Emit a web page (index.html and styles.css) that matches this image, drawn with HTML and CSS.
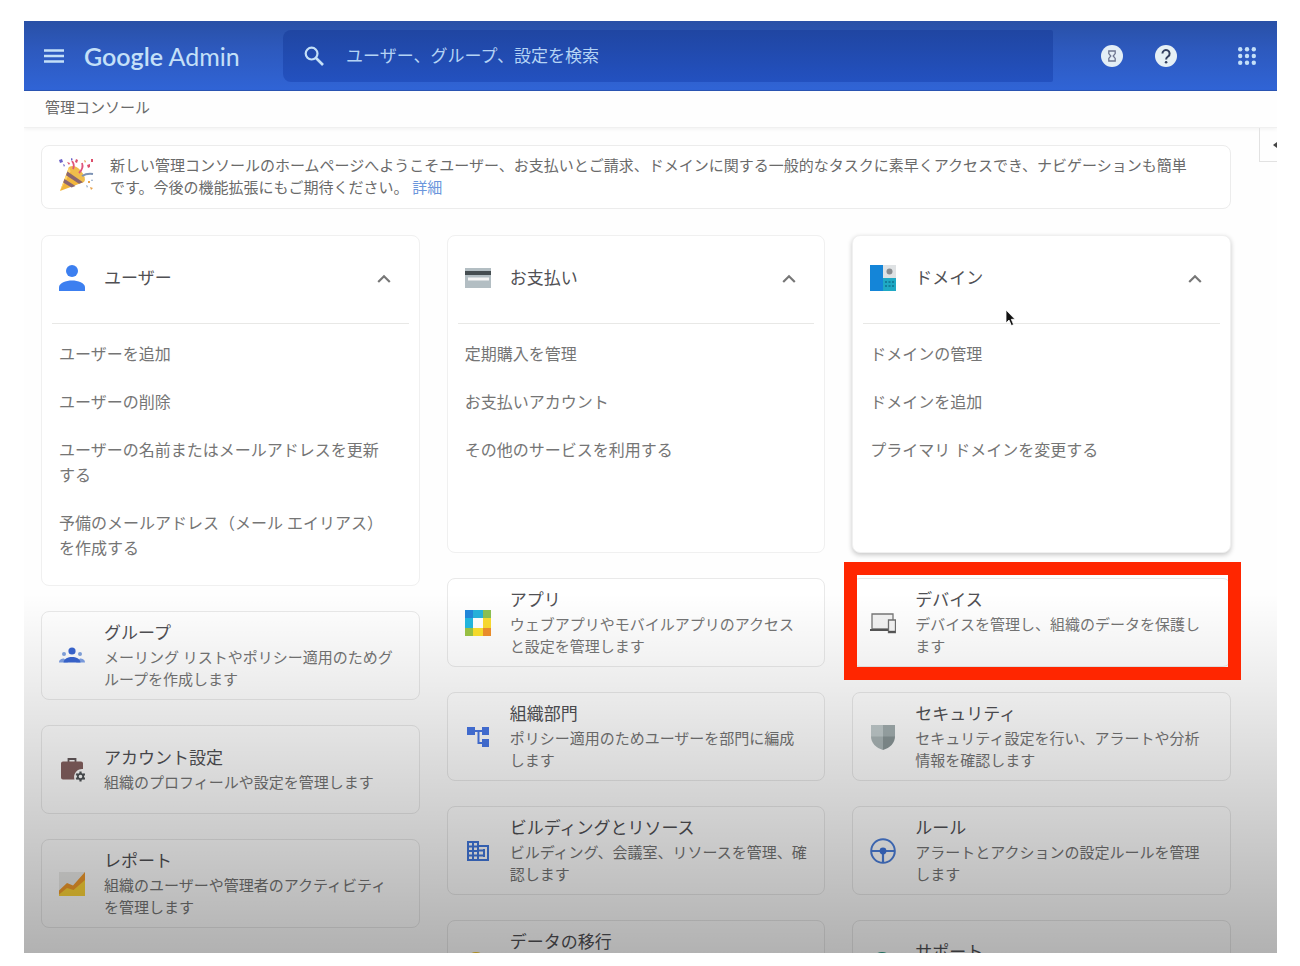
FILE: index.html
```html
<!DOCTYPE html>
<html lang="ja">
<head>
<meta charset="utf-8">
<meta name="viewport" content="width=device-width, initial-scale=1">
<title>Google Admin</title>
<link rel="stylesheet" href="styles.css">
</head>
<body>
<div class="frame">
  <header class="topbar">
    <div class="brand">
      <button class="icon-button" type="button" aria-label="メニュー">
        <svg width="20" height="16" viewBox="0 0 20 16"><path d="M0 2.5h20M0 8h20M0 13.5h20" stroke="currentColor" stroke-width="2.4"/></svg>
      </button>
      <a class="logo" href="#"><span class="logo-name">Google</span> Admin</a>
    </div>
    <form class="search" role="search">
      <button class="icon-button" type="button" aria-label="検索">
        <svg width="20" height="20" viewBox="0 0 20 20" fill="none" stroke="currentColor"><circle cx="7.6" cy="7.6" r="5.9" stroke-width="2.2"/><path d="M12 12l7 7" stroke-width="2.6"/></svg>
      </button>
      <input class="search-input" type="text" aria-label="検索" placeholder="ユーザー、グループ、設定を検索">
    </form>
    <div class="actions">
      <button class="icon-button" type="button" aria-label="タスク">
        <svg width="22" height="22" viewBox="0 0 22 22"><circle cx="11" cy="11" r="11" fill="#e3eef6"/><path d="M7.800 6h6.400v2.600L12.200 11l2 2.400V16H7.800v-2.600l2-2.400-2-2.400z" fill="none" stroke="#6d7590" stroke-width="1.300"/></svg>
      </button>
      <button class="icon-button" type="button" aria-label="ヘルプ">
        <svg width="22" height="22" viewBox="0 0 22 22"><circle cx="11" cy="11" r="11" fill="#e6f0f5"/><path d="M7.400 8.600a3.600 3.600 0 1 1 5.700 2.900c-1.300 1-2 1.500-2 2.900" fill="none" stroke="#33405f" stroke-width="2"/><circle cx="11.100" cy="17.200" r="1.300" fill="#33405f"/></svg>
      </button>
      <button class="icon-button apps" type="button" aria-label="アプリ一覧">
        <svg width="18" height="18" viewBox="0 0 18 18" fill="currentColor"><circle cx="2.200" cy="2.200" r="2.200"/><circle cx="9" cy="2.200" r="2.200"/><circle cx="15.800" cy="2.200" r="2.200"/><circle cx="2.200" cy="9" r="2.200"/><circle cx="9" cy="9" r="2.200"/><circle cx="15.800" cy="9" r="2.200"/><circle cx="2.200" cy="15.800" r="2.200"/><circle cx="9" cy="15.800" r="2.200"/><circle cx="15.800" cy="15.800" r="2.200"/></svg>
      </button>
    </div>
  </header>

  <nav class="breadcrumb">管理コンソール</nav>

  <main class="content">
    <button class="side-tab" type="button" aria-label="パネルを開く">
      <svg width="8" height="12" viewBox="0 0 8 12"><path d="M8 0L0 6l8 6z" fill="#444"/></svg>
    </button>

    <section class="banner">
      <svg class="banner-icon" width="36" height="36" viewBox="0 0 36 36">
        <path d="M2 34L11 10Q22 14 26 25z" fill="#f2b63c"/>
        <path d="M2 34L11 10l3 2z" fill="#ffd56b"/>
        <path d="M11 10Q17 7 23 14T26 25Q15 24 11 10z" fill="#f0bd4c"/>
        <path d="M6.500 22l11 7-4 1.500-8.300-5zM9.400 14.500l15.600 10.700-4 1.600L8 18.200z" fill="#8a6670"/>
        <path d="M15 12q2-4-1-8M21 16q5-5 3-10" fill="none" stroke="#e0567a" stroke-width="1.800"/>
        <path d="M24 19q5-3 11-2" fill="none" stroke="#7d93b5" stroke-width="2"/>
        <path d="M1 3l3-1 1 3-3 1zM5 7l2 1-1 2zM13 1l2 1-2 2z" fill="#6c62c8"/>
        <path d="M18 2l2 1-1 3-2-1zM29 8l3-1 0 3-2 1zM33 2l2 0 0 3-2 0zM9 5l3 1-1 2z" fill="#dc4f6c"/>
        <path d="M26 3l2 1-1 2zM30 24l2 0 0 2-2 0zM32 30l3 1-2 2z" fill="#e8a24a"/>
        <path d="M28 28l2 1-1 2zM34 22l1 2-2 0z" fill="#94aac8"/>
      </svg>
      <p class="banner-text">新しい管理コンソールのホームページへようこそユーザー、お支払いとご請求、ドメインに関する一般的なタスクに素早くアクセスでき、ナビゲーションも簡単<br>です。今後の機能拡張にもご期待ください。 <a class="more" href="#">詳細</a></p>
    </section>

    <div class="columns">
      <div class="column">
        <section class="card panel">
          <div class="panel-head">
            <svg class="icon" viewBox="0 0 26 26" fill="#3c7ff0"><circle cx="13" cy="6" r="6"/><path d="M0 26v-3.500C0 18 7 15.600 13 15.600S26 18 26 22.500V26z"/></svg>
            <h2 class="title">ユーザー</h2>
            <button class="chevron" type="button" aria-label="閉じる"><svg width="14" height="9" viewBox="0 0 14 9"><path d="M1.200 8L7 2.200 12.800 8" fill="none" stroke="#777" stroke-width="2.200"/></svg></button>
          </div>
          <ul class="links">
            <li><a href="#">ユーザーを追加</a></li>
            <li><a href="#">ユーザーの削除</a></li>
            <li><a href="#">ユーザーの名前またはメールアドレスを更新<br>する</a></li>
            <li><a href="#">予備のメールアドレス（メール エイリアス）<br>を作成する</a></li>
          </ul>
        </section>
        <a class="card tile" href="#">
          <svg class="icon" viewBox="0 0 26 26"><circle cx="13" cy="8" r="3.600" fill="#3a66d2"/><circle cx="5" cy="11" r="2" fill="#84a5e0"/><circle cx="21" cy="11" r="2" fill="#84a5e0"/><path d="M0 19.500c0-3 2.500-4 5-4l4 4zM26 19.500c0-3-2.500-4-5-4l-4 4z" fill="#7fa1e6"/><path d="M4.500 19.500C5 15.500 9 14 13 14s8 1.500 8.500 5.500z" fill="#3a66d2"/></svg>
          <span class="tile-text"><strong class="title">グループ</strong><span class="desc">メーリング リストやポリシー適用のためグ<br>ループを作成します</span></span>
        </a>
        <a class="card tile" href="#">
          <svg class="icon" viewBox="0 0 26 26"><path d="M9.500 5V2h7v3" fill="none" stroke="#64595b" stroke-width="1.800"/><path d="M4 4.500h18q2 0 2 2V12a8 8 0 0 0-8.500 10.500H4q-2 0-2-2v-14q0-2 2-2z" fill="#84605f"/><path d="M21.500 14.500v10M17.200 17l8.600 5M25.800 17l-8.600 5" stroke="#505457" stroke-width="2.200"/><circle cx="21.500" cy="19.500" r="2.700" fill="#fff" stroke="#505457" stroke-width="1.800"/></svg>
          <span class="tile-text"><strong class="title">アカウント設定</strong><span class="desc">組織のプロフィールや設定を管理します</span></span>
        </a>
        <a class="card tile" href="#">
          <svg class="icon" viewBox="0 0 26 26"><path d="M0 1h26v24H0z" fill="#ececea"/><path d="M0 22.500L8 16l5 2L26 5v20H0z" fill="#fbd338"/><path d="M0 19.500L8 12l6 2.500L26 1v8L14.500 19 8 17 0 23.500z" fill="#f19a2c"/></svg>
          <span class="tile-text"><strong class="title">レポート</strong><span class="desc">組織のユーザーや管理者のアクティビティ<br>を管理します</span></span>
        </a>
      </div>

      <div class="column">
        <section class="card panel">
          <div class="panel-head">
            <svg class="icon" viewBox="0 0 26 26"><path d="M0 3h26v20H0z" fill="#b3bec3"/><path d="M0 6h26v4H0z" fill="#454d51"/><path d="M3 12.500h21v3H3z" fill="#f5f5f5"/></svg>
            <h2 class="title">お支払い</h2>
            <button class="chevron" type="button" aria-label="閉じる"><svg width="14" height="9" viewBox="0 0 14 9"><path d="M1.200 8L7 2.200 12.800 8" fill="none" stroke="#777" stroke-width="2.200"/></svg></button>
          </div>
          <ul class="links">
            <li><a href="#">定期購入を管理</a></li>
            <li><a href="#">お支払いアカウント</a></li>
            <li><a href="#">その他のサービスを利用する</a></li>
          </ul>
        </section>
        <a class="card tile" href="#">
          <svg class="icon" viewBox="0 0 26 26"><path d="M0 0h8v8H0z" fill="#2188dc"/><path d="M8 0h10v8H8z" fill="#26b3dc"/><path d="M18 0h8v8h-8z" fill="#8cc152"/><path d="M0 8h8v10H0z" fill="#22b8e2"/><path d="M18 8h8v10h-8z" fill="#fbdc30"/><path d="M0 18h8v8H0z" fill="#9cc545"/><path d="M8 18h10v8H8z" fill="#fce02c"/><path d="M18 18h8v8h-8z" fill="#f0902c"/><path d="M8 8h10v10H8z" fill="#fff"/></svg>
          <span class="tile-text"><strong class="title">アプリ</strong><span class="desc">ウェブアプリやモバイルアプリのアクセス<br>と設定を管理します</span></span>
        </a>
        <a class="card tile" href="#">
          <svg class="icon" viewBox="0 0 26 26"><path d="M2 3h8v8H2zM17 3h7v8h-7zM17 15h7v8h-7z" fill="#4877e6"/><path d="M9 7h9M13.500 7v12H18" fill="none" stroke="#4877e6" stroke-width="2"/></svg>
          <span class="tile-text"><strong class="title">組織部門</strong><span class="desc">ポリシー適用のためユーザーを部門に編成<br>します</span></span>
        </a>
        <a class="card tile" href="#">
          <svg class="icon" viewBox="0 0 26 26" fill="none" stroke="#4278dd" stroke-width="2"><path d="M3 4h10v18H3zM13 8h10v14H13zM8 4v18M3 8.500h10M3 13h10M3 17.500h10M14 12.500h5M14 17.500h5M19 11v8"/></svg>
          <span class="tile-text"><strong class="title">ビルディングとリソース</strong><span class="desc">ビルディング、会議室、リソースを管理、確<br>認します</span></span>
        </a>
        <a class="card tile tile-partial" href="#">
          <svg class="icon" viewBox="0 0 26 26"><circle cx="11" cy="10.500" r="10.500" fill="#f5c92e"/></svg>
          <span class="tile-text"><strong class="title">データの移行</strong></span>
        </a>
      </div>

      <div class="column">
        <section class="card panel raised">
          <div class="panel-head">
            <svg class="icon" viewBox="0 0 26 26"><path d="M0 0h13v26H0z" fill="#1485d8"/><path d="M13 0h13v13H13z" fill="#dfe2e4"/><path d="M13 13h13v13H13z" fill="#1fa9c4"/><circle cx="19.500" cy="6.500" r="3" fill="#8a8d90"/><path d="M15 17h9M15 21h9" stroke="#147f9c" stroke-width="1.800" stroke-dasharray="2 1.500"/></svg>
            <h2 class="title">ドメイン</h2>
            <button class="chevron" type="button" aria-label="閉じる"><svg width="14" height="9" viewBox="0 0 14 9"><path d="M1.200 8L7 2.200 12.800 8" fill="none" stroke="#777" stroke-width="2.200"/></svg></button>
            <svg class="pointer" width="11" height="18" viewBox="0 0 11 18"><path d="M1 1v13l3-3 2.400 5.600 2.200-1L6.300 10.300H10z" fill="#111" stroke="#fff" stroke-width=".8"/></svg>
          </div>
          <ul class="links">
            <li><a href="#">ドメインの管理</a></li>
            <li><a href="#">ドメインを追加</a></li>
            <li><a href="#">プライマリ ドメインを変更する</a></li>
          </ul>
        </section>
        <a class="card tile marked" href="#">
          <svg class="icon" viewBox="0 0 26 26"><path d="M2 4h21v15H2z" fill="#f3f3f3" stroke="#777" stroke-width="1.300"/><path d="M0 20h18" stroke="#555" stroke-width="2"/><path d="M18.500 10h7v12.500h-7z" fill="#f5f5f5" stroke="#707070" stroke-width="1.300"/><path d="M18.500 21.800h7" stroke="#555" stroke-width="2"/></svg>
          <span class="tile-text"><strong class="title">デバイス</strong><span class="desc">デバイスを管理し、組織のデータを保護し<br>ます</span></span>
        </a>
        <a class="card tile" href="#">
          <svg class="icon" viewBox="0 0 26 26"><path d="M1 1h12v12H1z" fill="#c2cccd"/><path d="M13 1h12v12H13z" fill="#a3afb0"/><path d="M1 12.500h12V26C6 24 1 19 1 12.500z" fill="#aab5b6"/><path d="M25 12.500H13V26c7-2 12-7 12-13.500z" fill="#899596"/></svg>
          <span class="tile-text"><strong class="title">セキュリティ</strong><span class="desc">セキュリティ設定を行い、アラートや分析<br>情報を確認します</span></span>
        </a>
        <a class="card tile" href="#">
          <svg class="icon" viewBox="0 0 26 26" fill="none" stroke="#4b7fdc"><circle cx="13" cy="13" r="11.800" stroke-width="2"/><path d="M1.500 13h23M13 13v12" stroke-width="2.200"/><circle cx="13" cy="13" r="3.400" fill="#3e74da" stroke="none"/></svg>
          <span class="tile-text"><strong class="title">ルール</strong><span class="desc">アラートとアクションの設定ルールを管理<br>します</span></span>
        </a>
        <a class="card tile tile-partial tile-single" href="#">
          <svg class="icon" viewBox="0 0 26 26"><circle cx="12" cy="10.500" r="10.500" fill="#2f9c85"/></svg>
          <span class="tile-text"><strong class="title">サポート</strong></span>
        </a>
      </div>
    </div>
  </main>
</div>
</body>
</html>
```

FILE: styles.css
```css
* {
  box-sizing: border-box;
}

body {
  margin: 0;
  height: 100vh;
  padding: 21px 23px 13px 24px;
  background: #fff;
  color: #6a6a6a;
  font-family: Roboto, "Noto Sans CJK JP", sans-serif;
  font-size: 15px;
  font-weight: 400;
}

a {
  color: inherit;
  text-decoration: none;
}

button {
  padding: 0;
  border: 0;
  background: none;
  color: inherit;
}

svg {
  display: block;
  flex: none;
}

.frame {
  position: relative;
  height: 100%;
  overflow: hidden;
  background: #fefefe;
}

/* Shade that darkens the lower part of the page */
.frame::after {
  content: "";
  position: absolute;
  z-index: 2;
  inset: auto 0 0 0;
  height: 360px;
  background: linear-gradient(rgba(0, 0, 0, 0), rgba(0, 0, 0, 0.08) 28%, rgba(0, 0, 0, 0.3));
  pointer-events: none;
}

/* Top bar */
.topbar {
  display: flex;
  align-items: center;
  height: 70px;
  padding-right: 21px;
  border-bottom: 1px solid #2b55b5;
  background: linear-gradient(#2950a6, #2d59bd 40%, #3064d6);
  color: #c4e0f8;
}

.brand {
  display: flex;
  flex: 0 0 259px;
  align-items: center;
  gap: 20px;
  padding-left: 20px;
}

.logo {
  font-family: Lato, sans-serif;
  font-size: 25px;
  line-height: 32px;
  white-space: nowrap;
}

.logo-name {
  font-weight: 600;
}

.search {
  display: flex;
  flex: 1;
  align-items: center;
  gap: 22px;
  height: 52px;
  padding-left: 21px;
  border-radius: 8px 2px 2px 8px;
  background: linear-gradient(#2046a2, #2351c0);
}

.search-input {
  flex: 1;
  min-width: 0;
  padding: 0;
  border: 0;
  outline: 0;
  background: none;
  color: inherit;
  font-family: inherit;
  font-size: 17px;
}

.search-input::placeholder {
  color: #b4d3f5;
  opacity: 1;
}

.actions {
  display: flex;
  align-items: center;
  gap: 32px;
  margin-left: 48px;
}

.apps {
  margin-left: 29px;
}

.breadcrumb {
  padding: 5px 21px 7px;
  border-bottom: 1px solid #f0f0f0;
  box-shadow: 0 1px 4px rgba(0, 0, 0, 0.06);
  line-height: 24px;
}

/* Page body */
.content {
  position: relative;
  padding: 17px 46px 0 17px;
}

.side-tab {
  position: absolute;
  top: 0;
  right: 0;
  display: flex;
  align-items: center;
  justify-content: flex-end;
  width: 18px;
  height: 34px;
  overflow: hidden;
  border: 1px solid #e2e2e2;
  border-width: 0 0 1px 1px;
}

.side-tab svg {
  margin-right: -4px;
}

.banner {
  display: flex;
  gap: 16px;
  margin-bottom: 26px;
  padding: 9px 16px;
  border: 1px solid #ececec;
  border-radius: 8px;
  background: #fff;
}

.banner-text {
  margin: 0;
  line-height: 22px;
}

.banner-icon {
  margin-top: 2px;
}

.more {
  color: #6b96dc;
}

.columns {
  display: grid;
  grid-template-columns: repeat(3, minmax(0, 1fr));
  gap: 27px;
}

.column {
  display: flex;
  flex-direction: column;
  gap: 25px;
}

.card {
  border: 1px solid #e9e9e9;
  border-radius: 8px;
  background: #fff;
}

.icon {
  width: 26px;
  height: 26px;
}

.title {
  margin: 0;
  color: #505054;
  font-size: 17px;
  font-weight: 400;
  line-height: 28px;
}

/* Expanded panels */
.panel {
  min-height: 318px;
  padding: 0 10px 24px;
  border-color: #f0f0f0;
}

.raised {
  box-shadow: 0 2px 5px rgba(0, 0, 0, 0.22);
}

.panel-head {
  position: relative;
  display: flex;
  align-items: center;
  gap: 19px;
  height: 88px;
  padding: 0 18px 3px 7px;
  border-bottom: 1px solid #e8e8e6;
}

.chevron {
  margin-left: auto;
}

.pointer {
  position: absolute;
  left: 142px;
  top: 73px;
}

.links {
  display: grid;
  gap: 23px;
  margin: 0;
  padding: 18px 7px 0;
  color: #757575;
  font-size: 16px;
  line-height: 25px;
  list-style: none;
  white-space: nowrap;
}

/* Compact tiles */
.tile {
  position: relative;
  display: flex;
  align-items: center;
  gap: 19px;
  min-height: 89px;
  padding: 0 17px;
}

.tile-text {
  display: grid;
  padding-bottom: 2px;
  white-space: nowrap;
}

.desc {
  color: #757575;
  line-height: 22px;
}

/* Tiles that run past the lower edge of the frame */
.tile-partial .tile-text {
  align-self: flex-start;
  padding-top: 7px;
}

.tile-single .tile-text {
  padding-top: 17px;
}

/* Callout frame around the highlighted tile */
.marked::after {
  content: "";
  position: absolute;
  z-index: 3;
  inset: -17px -11px -14px -9px;
  border: 13px solid #ff2600;
}
```
